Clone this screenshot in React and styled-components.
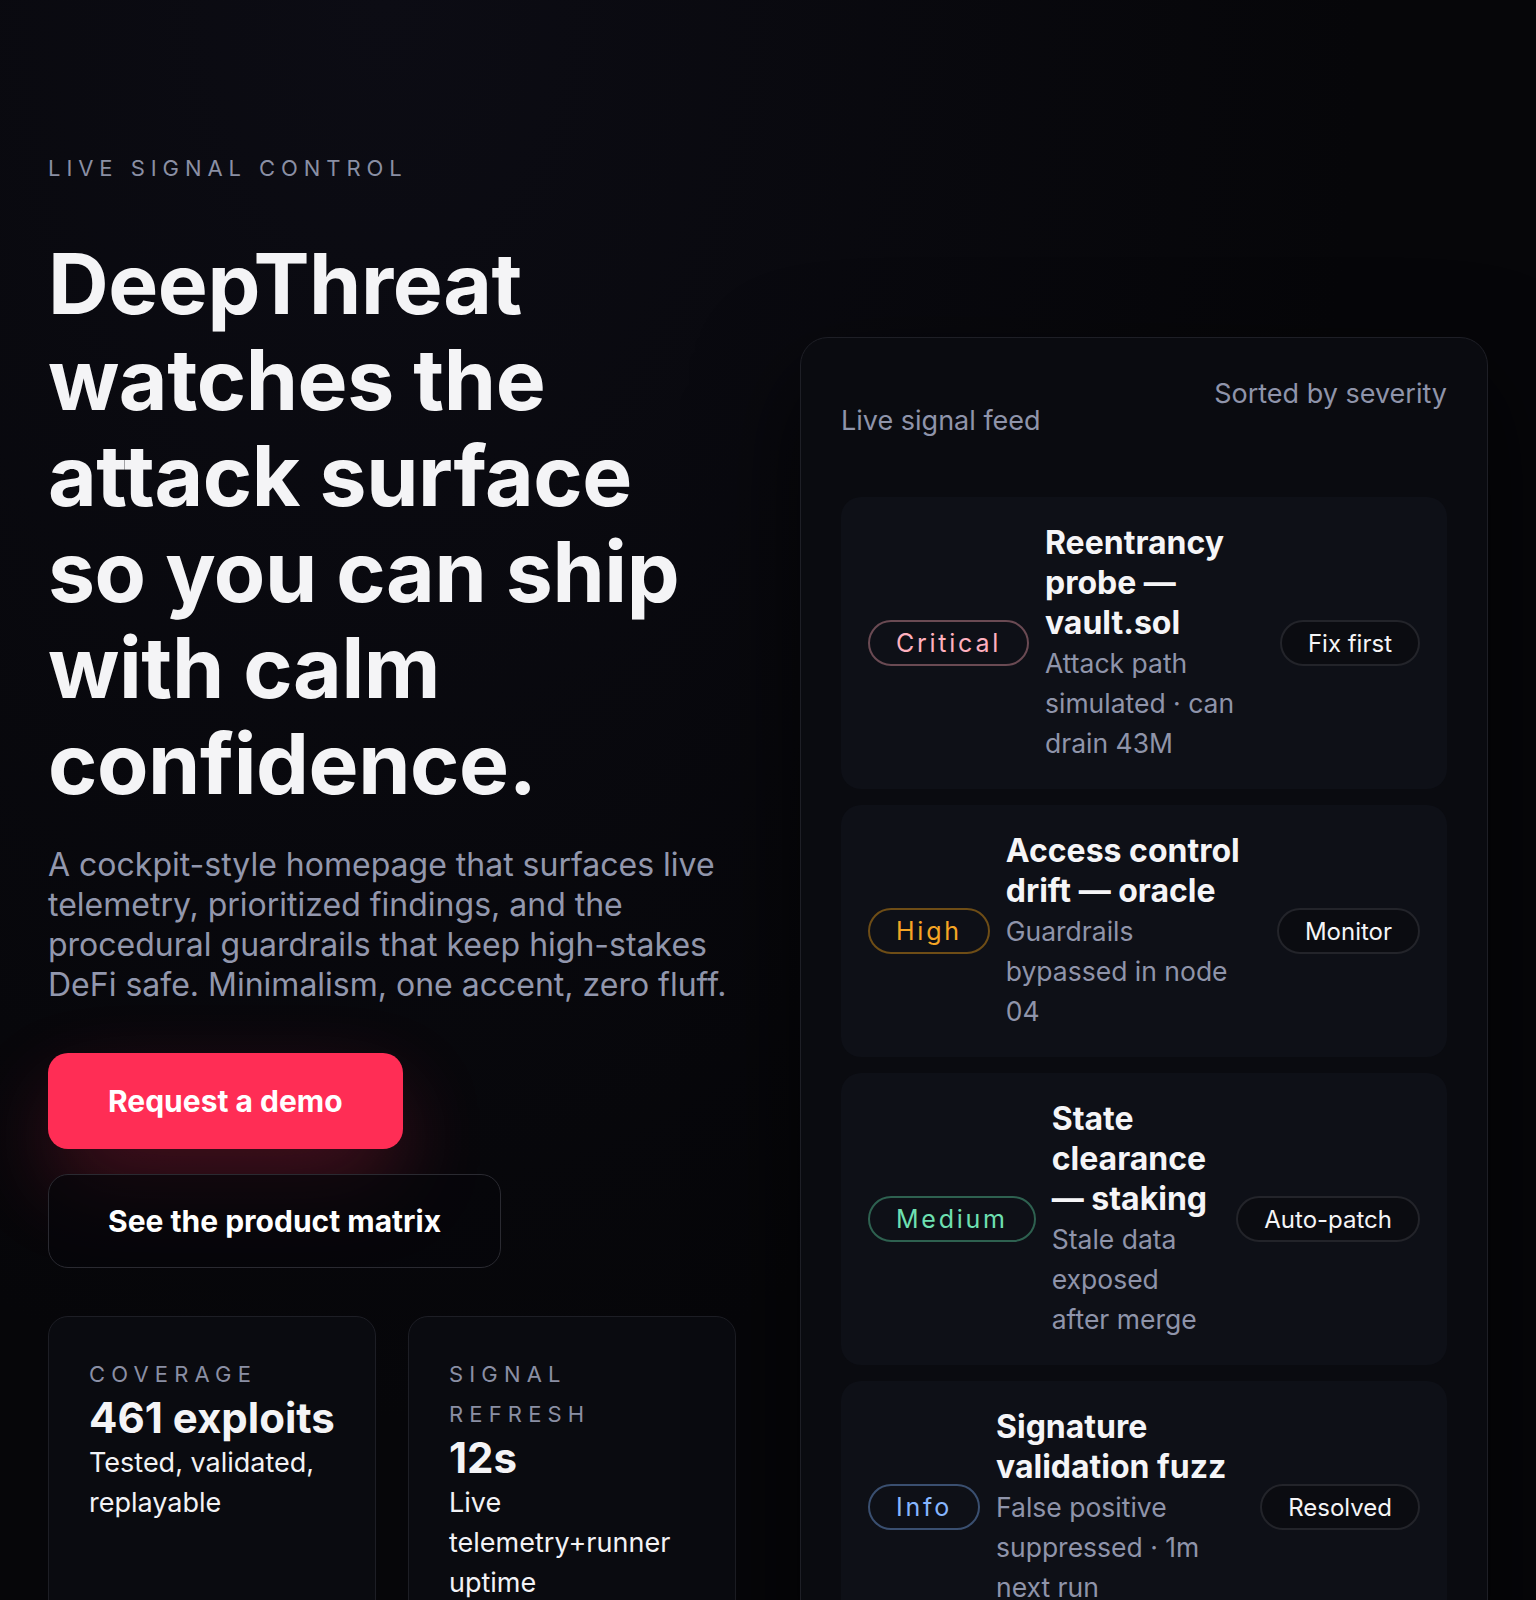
import React from 'react';
import styled, { createGlobalStyle } from 'styled-components';

const GlobalStyle = createGlobalStyle`
  * { box-sizing: border-box; }
  body {
    margin: 0;
    background: radial-gradient(ellipse at 25% 0%, #0c0c14 0%, rgba(12,12,20,0) 60%), #060609;
    color: #f4f4f6;
    font-family: Inter, "Noto Sans", sans-serif;
  }
`;

const Page = styled.main`
  min-height: 1600px;
  padding: 148px 48px 0;
  display: grid;
  grid-template-columns: 1fr 1fr;
  column-gap: 64px;
  align-items: start;
  overflow: hidden;
`;

const Left = styled.section`
  display: flex;
  flex-direction: column;
`;

const Eyebrow = styled.div`
  font-size: 22px;
  line-height: 40px;
  letter-spacing: 0.27em;
  text-transform: uppercase;
  color: #8a8fa4;
`;

const Headline = styled.h1`
  margin: 48px 0 0;
  font-size: 84px;
  line-height: 96px;
  font-weight: 700;
  letter-spacing: -0.005em;
  color: #f4f4f6;
`;

const Lead = styled.p`
  margin: 33px 0 0;
  font-size: 32px;
  line-height: 40px;
  color: #9297ad;
`;

const Actions = styled.div`
  margin-top: 48px;
  display: flex;
  flex-direction: column;
  align-items: flex-start;
  gap: 25px;
`;

const Button = styled.a`
  display: inline-flex;
  align-items: center;
  padding: 0 ${p => (p.$primary ? '60px' : '59px')};
  height: ${p => (p.$primary ? '96px' : '94px')};
  border-radius: 20px;
  font-size: 30px;
  font-weight: 700;
  color: #fff;
  text-decoration: none;
  background: ${p => (p.$primary ? '#ff2d55' : 'rgba(6,6,10,0.7)')};
  border: ${p => (p.$primary ? 'none' : '1px solid #2a2a31')};
  box-shadow: ${p => (p.$primary ? '0 36px 90px -10px rgba(255,45,85,0.32)' : 'none')};
`;

const Stats = styled.div`
  margin-top: 48px;
  display: grid;
  grid-template-columns: 1fr 1fr;
  gap: 32px;
`;

const StatCard = styled.div`
  min-height: 340px;
  padding: 37px 40px;
  border-radius: 20px;
  border: 1px solid #1d1e25;
  background: #0a0b10;
`;

const StatLabel = styled.div`
  font-size: 22px;
  line-height: 40px;
  letter-spacing: 0.28em;
  text-transform: uppercase;
  color: #8a8fa4;
`;

const StatValue = styled.div`
  font-size: 42px;
  line-height: 48px;
  font-weight: 700;
  white-space: nowrap;
`;

const StatNote = styled.div`
  margin-top: 1px;
  font-size: 27px;
  line-height: 40px;
  color: #f2f2f5;
`;

const Panel = styled.section`
  margin-top: 189px;
  padding: 36px 40px 40px;
  border-radius: 28px;
  border: 1px solid #1e1f26;
  background: #0a0b10;
  box-shadow: 0 40px 100px rgba(0, 0, 0, 0.7);
`;

const PanelHead = styled.header`
  display: flex;
  justify-content: space-between;
  align-items: flex-start;
  margin-bottom: 56px;
  font-size: 27px;
  line-height: 40px;
  color: #8f94aa;
`;

const FeedTitle = styled.div`
  padding-top: 27px;
`;

const Feed = styled.div`
  display: flex;
  flex-direction: column;
  gap: 16px;
`;

const Item = styled.article`
  display: grid;
  grid-template-columns: auto 1fr auto;
  align-items: center;
  column-gap: 16px;
  padding: 26px 27px;
  border-radius: 20px;
  background: #0e1017;
`;

const tones = {
  critical: { color: '#ffb0bf', border: '#6a4a53' },
  high: { color: '#f5a524', border: '#6e4d16' },
  medium: { color: '#6ee0b2', border: '#2e6150' },
  info: { color: '#86b6ff', border: '#3a4f70' },
};

const Badge = styled.span`
  display: inline-flex;
  align-items: center;
  height: 46px;
  padding: 0 26px;
  border-radius: 999px;
  font-size: 25px;
  letter-spacing: 0.11em;
  color: ${p => tones[p.$tone].color};
  border: 2px solid ${p => tones[p.$tone].border};
`;

const ItemBody = styled.div`
  min-width: 0;
`;

const ItemTitle = styled.h3`
  margin: 0;
  font-size: 32px;
  line-height: 40px;
  font-weight: 700;
  color: #f5f5f7;
`;

const ItemDesc = styled.p`
  margin: 0;
  font-size: 26.5px;
  line-height: 40px;
  color: #8f94aa;
`;

const Action = styled.span`
  display: inline-flex;
  align-items: center;
  height: 46px;
  padding: 0 26px;
  border-radius: 999px;
  font-size: 24px;
  color: #f5f5f7;
  border: 2px solid #23242a;
  background: #0b0c11;
`;

const findings = [
  { tone: 'critical', label: 'Critical', title: 'Reentrancy probe — vault.sol', desc: 'Attack path simulated · can drain 43M', action: 'Fix first' },
  { tone: 'high', label: 'High', title: 'Access control drift — oracle', desc: 'Guardrails bypassed in node 04', action: 'Monitor' },
  { tone: 'medium', label: 'Medium', title: 'State clearance — staking', desc: 'Stale data exposed after merge', action: 'Auto-patch' },
  { tone: 'info', label: 'Info', title: 'Signature validation fuzz', desc: 'False positive suppressed · 1m next run', action: 'Resolved' },
];

const stats = [
  { label: 'Coverage', value: '461 exploits', note: 'Tested, validated, replayable' },
  { label: 'Signal refresh', value: '12s', note: 'Live telemetry+runner uptime' },
];

export default function App() {
  return (
    <>
      <GlobalStyle />
      <Page>
        <Left>
          <Eyebrow>Live signal control</Eyebrow>
          <Headline>DeepThreat watches the attack surface so you can ship with calm confidence.</Headline>
          <Lead>
            A cockpit-style homepage that surfaces live telemetry, prioritized findings, and the
            procedural guardrails that keep high-stakes DeFi safe. Minimalism, one accent, zero fluff.
          </Lead>
          <Actions>
            <Button $primary href="#demo">Request a demo</Button>
            <Button href="#matrix">See the product matrix</Button>
          </Actions>
          <Stats>
            {stats.map(s => (
              <StatCard key={s.label}>
                <StatLabel>{s.label}</StatLabel>
                <StatValue>{s.value}</StatValue>
                <StatNote>{s.note}</StatNote>
              </StatCard>
            ))}
          </Stats>
        </Left>

        <Panel>
          <PanelHead>
            <FeedTitle>Live signal feed</FeedTitle>
            <div>Sorted by severity</div>
          </PanelHead>
          <Feed>
            {findings.map(f => (
              <Item key={f.label}>
                <Badge $tone={f.tone}>{f.label}</Badge>
                <ItemBody>
                  <ItemTitle>{f.title}</ItemTitle>
                  <ItemDesc>{f.desc}</ItemDesc>
                </ItemBody>
                <Action>{f.action}</Action>
              </Item>
            ))}
          </Feed>
        </Panel>
      </Page>
    </>
  );
}
